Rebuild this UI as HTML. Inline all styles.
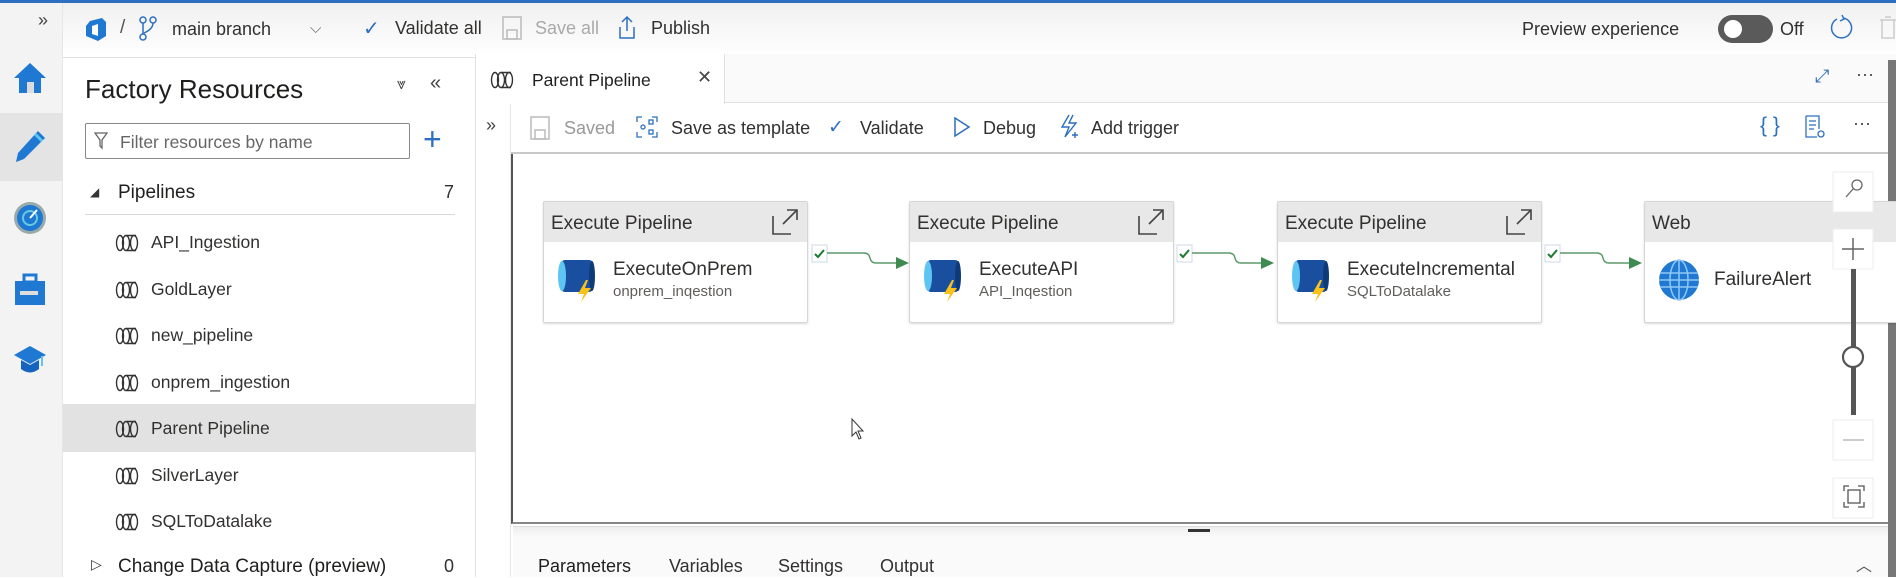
<!DOCTYPE html>
<html><head><meta charset="utf-8"><style>
*{box-sizing:border-box;margin:0;padding:0}
body{width:1896px;height:577px;overflow:hidden;background:#fff;font-family:"Liberation Sans",sans-serif;color:#323130;position:relative}
.a{position:absolute;white-space:nowrap}
.t18{font-size:18px}
.box{position:absolute;width:265px;height:122px;border:1px solid #d6d6d6;background:#fff;box-shadow:0 1px 2px rgba(0,0,0,.15);border-radius:2px}
.box .h{height:40px;background:#e8e8e8;font-size:19px;color:#323130;padding:11px 7px}
.box .n{position:absolute;left:69px;top:57px;font-size:19px}
.box .s{position:absolute;left:69px;top:81px;font-size:15px;color:#605e5c}
.item{position:absolute;left:63px;width:412px;height:47px;font-size:17.5px}
.item span{position:absolute;left:88px;top:13px}
.item svg{position:absolute;left:52px;top:15px}
</style></head><body>
<div class="a" style="left:0;top:0;width:1896px;height:3px;background:#2d6fc0"></div>
<div class="a" style="left:0;top:3px;width:1896px;height:55px;background:linear-gradient(#f0f0f0,#fff);border-bottom:1px solid #e1e1e1"></div>
<div class="a" style="left:0;top:3px;width:63px;height:574px;background:#f3f3f3;border-right:1px solid #e6e6e6"></div>
<div class="a" style="left:0;top:113px;width:63px;height:68px;background:#e4e4e4"></div>
<div class="a" style="left:38px;top:10px;font-size:18px;color:#444">»</div>
<!-- nav icons -->
<svg class="a" style="left:12px;top:60px" width="36" height="36" viewBox="0 0 36 36"><path d="M18 3 L34 18 H29 V33 H7 V18 H2 Z" fill="#1f78d1"/><rect x="15" y="22" width="7" height="11" fill="#ddd"/></svg>
<svg class="a" style="left:12px;top:128px" width="36" height="36" viewBox="0 0 36 36"><path d="M26 3 L33 10 L12 31 L4 34 L6 25 Z" fill="#1f78d1"/><path d="M23 6 L30 13" stroke="#5ec5f2" stroke-width="3"/></svg>
<svg class="a" style="left:12px;top:200px" width="36" height="36" viewBox="0 0 36 36"><circle cx="18" cy="18" r="16" fill="#9aa"/><circle cx="18" cy="18" r="13" fill="#1f78d1"/><circle cx="18" cy="18" r="7" fill="none" stroke="#6cd" stroke-width="2"/><path d="M18 18 L25 10" stroke="#fff" stroke-width="2"/></svg>
<svg class="a" style="left:12px;top:272px" width="36" height="36" viewBox="0 0 36 36"><rect x="3" y="9" width="30" height="24" fill="#1f78d1"/><rect x="12" y="3" width="12" height="7" fill="none" stroke="#1f78d1" stroke-width="3"/><rect x="8" y="19" width="18" height="4" fill="#ddd"/></svg>
<svg class="a" style="left:12px;top:342px" width="36" height="36" viewBox="0 0 36 36"><path d="M18 4 L34 13 L18 22 L2 13 Z" fill="#1f78d1"/><path d="M9 18 V27 Q18 34 27 27 V18 L18 23 Z" fill="#1565c0"/><path d="M30 14 V24" stroke="#5ec5f2" stroke-width="2"/></svg>
<!-- top bar -->
<svg class="a" style="left:84px;top:17px" width="24" height="26" viewBox="0 0 24 26"><path d="M6 4 L18 1 L22 5 V19 L14 24 L2 19 V9 Z" fill="#1f78d1"/><path d="M8 9 V17 L14 19 V7 Z" fill="#fff"/></svg>
<div class="a" style="left:120px;top:17px;font-size:19px;color:#555">/</div>
<svg class="a" style="left:138px;top:16px" width="22" height="26" viewBox="0 0 22 26" fill="none" stroke="#2d6fc0" stroke-width="1.5"><circle cx="5" cy="4" r="3"/><circle cx="5" cy="21" r="3"/><circle cx="15" cy="4" r="3"/><path d="M5 7 V18 M15 7 Q15 13 6 17"/></svg>
<div class="a t18" style="left:172px;top:19px">main branch</div>
<div class="a" style="left:310px;top:20px;font-size:15px;color:#666">⌵</div>
<div class="a" style="left:363px;top:16px;font-size:20px;color:#2d6fc0">✓</div>
<div class="a t18" style="left:395px;top:18px">Validate all</div>
<svg class="a" style="left:502px;top:16px" width="20" height="24" viewBox="0 0 20 24" fill="none" stroke="#bbb" stroke-width="1.5"><rect x="1" y="1" width="18" height="22"/><rect x="5" y="14" width="10" height="9"/></svg>
<div class="a t18" style="left:535px;top:18px;color:#aaa">Save all</div>
<svg class="a" style="left:617px;top:15px" width="20" height="26" viewBox="0 0 20 26" fill="none" stroke="#2d6fc0" stroke-width="1.5"><path d="M10 2 V16 M5 7 L10 2 L15 7 M3 12 V23 H17 V12"/></svg>
<div class="a t18" style="left:651px;top:18px">Publish</div>
<div class="a t18" style="left:1522px;top:19px">Preview experience</div>
<div class="a" style="left:1718px;top:15px;width:55px;height:28px;border-radius:14px;background:#5a5a5a"></div>
<div class="a" style="left:1724px;top:20px;width:18px;height:18px;border-radius:9px;background:#fff"></div>
<div class="a t18" style="left:1780px;top:19px">Off</div>
<svg class="a" style="left:1829px;top:15px" width="24" height="26" viewBox="0 0 24 26" fill="none" stroke="#2d6fc0" stroke-width="1.5"><path d="M8 4 A10 10 0 1 0 14 3 M13 0 L15 4 L11 6"/></svg>
<svg class="a" style="left:1878px;top:14px" width="18" height="26" viewBox="0 0 18 26" fill="none" stroke="#ccc" stroke-width="1.5"><path d="M2 6 H18 M4 6 V24 H16 V6 M7 3 H13"/></svg>
<!-- side panel -->
<div class="a" style="left:85px;top:74px;font-size:26px;color:#201f1e">Factory Resources</div>
<div class="a" style="left:397px;top:76px;font-size:16px;color:#444">⩔</div>
<div class="a" style="left:430px;top:72px;font-size:20px;color:#444">«</div>
<div class="a" style="left:85px;top:123px;width:325px;height:36px;border:1px solid #8a8886;border-radius:2px"></div>
<svg class="a" style="left:94px;top:132px" width="14" height="18" viewBox="0 0 14 18" fill="none" stroke="#666" stroke-width="1.3"><path d="M1 1 H13 L8 8 V16 L6 14 V8 Z"/></svg>
<div class="a" style="left:120px;top:132px;font-size:17.5px;color:#666">Filter resources by name</div>
<div class="a" style="left:423px;top:120px;font-size:32px;font-weight:200;color:#2d6fc0;line-height:38px">+</div>
<div class="a" style="left:90px;top:185px;font-size:12px;color:#333">◢</div>
<div class="a" style="left:118px;top:182px;font-size:19px;color:#201f1e">Pipelines</div>
<div class="a" style="left:444px;top:182px;font-size:18px">7</div>
<div class="a" style="left:85px;top:214px;width:370px;height:1px;background:#d8d8d8"></div>
<div class="a" style="left:63px;top:404px;width:412px;height:48px;background:#e2e2e2"></div>
<div class="item" style="top:219px"><svg width="28" height="18" viewBox="0 0 28 18" fill="none" stroke="#333" stroke-width="1.4"><ellipse cx="5" cy="9" rx="3.5" ry="7.5"/><ellipse cx="11" cy="9" rx="3.5" ry="7.5"/><ellipse cx="19" cy="9" rx="3.5" ry="7.5"/><path d="M11 1.5 H21 M11 16.5 H21"/></svg><span>API_Ingestion</span></div>
<div class="item" style="top:266px"><svg width="28" height="18" viewBox="0 0 28 18" fill="none" stroke="#333" stroke-width="1.4"><ellipse cx="5" cy="9" rx="3.5" ry="7.5"/><ellipse cx="11" cy="9" rx="3.5" ry="7.5"/><ellipse cx="19" cy="9" rx="3.5" ry="7.5"/><path d="M11 1.5 H21 M11 16.5 H21"/></svg><span>GoldLayer</span></div>
<div class="item" style="top:312px"><svg width="28" height="18" viewBox="0 0 28 18" fill="none" stroke="#333" stroke-width="1.4"><ellipse cx="5" cy="9" rx="3.5" ry="7.5"/><ellipse cx="11" cy="9" rx="3.5" ry="7.5"/><ellipse cx="19" cy="9" rx="3.5" ry="7.5"/><path d="M11 1.5 H21 M11 16.5 H21"/></svg><span>new_pipeline</span></div>
<div class="item" style="top:359px"><svg width="28" height="18" viewBox="0 0 28 18" fill="none" stroke="#333" stroke-width="1.4"><ellipse cx="5" cy="9" rx="3.5" ry="7.5"/><ellipse cx="11" cy="9" rx="3.5" ry="7.5"/><ellipse cx="19" cy="9" rx="3.5" ry="7.5"/><path d="M11 1.5 H21 M11 16.5 H21"/></svg><span>onprem_ingestion</span></div>
<div class="item" style="top:405px"><svg width="28" height="18" viewBox="0 0 28 18" fill="none" stroke="#333" stroke-width="1.4"><ellipse cx="5" cy="9" rx="3.5" ry="7.5"/><ellipse cx="11" cy="9" rx="3.5" ry="7.5"/><ellipse cx="19" cy="9" rx="3.5" ry="7.5"/><path d="M11 1.5 H21 M11 16.5 H21"/></svg><span>Parent Pipeline</span></div>
<div class="item" style="top:452px"><svg width="28" height="18" viewBox="0 0 28 18" fill="none" stroke="#333" stroke-width="1.4"><ellipse cx="5" cy="9" rx="3.5" ry="7.5"/><ellipse cx="11" cy="9" rx="3.5" ry="7.5"/><ellipse cx="19" cy="9" rx="3.5" ry="7.5"/><path d="M11 1.5 H21 M11 16.5 H21"/></svg><span>SilverLayer</span></div>
<div class="item" style="top:498px"><svg width="28" height="18" viewBox="0 0 28 18" fill="none" stroke="#333" stroke-width="1.4"><ellipse cx="5" cy="9" rx="3.5" ry="7.5"/><ellipse cx="11" cy="9" rx="3.5" ry="7.5"/><ellipse cx="19" cy="9" rx="3.5" ry="7.5"/><path d="M11 1.5 H21 M11 16.5 H21"/></svg><span>SQLToDatalake</span></div>
<div class="a" style="left:91px;top:556px;font-size:14px;color:#333">▷</div>
<div class="a" style="left:118px;top:556px;font-size:19px;color:#201f1e">Change Data Capture (preview)</div>
<div class="a" style="left:444px;top:556px;font-size:18px">0</div>
<!-- main area -->
<div class="a" style="left:475px;top:54px;width:1px;height:523px;background:#e1e1e1"></div>
<div class="a" style="left:476px;top:54px;width:1420px;height:49px;background:#fafafa;border-bottom:1px solid #e1e1e1"></div>
<div class="a" style="left:476px;top:54px;width:249px;height:50px;background:#fff;border-right:1px solid #e1e1e1"></div>
<svg class="a" style="left:490px;top:71px" width="28" height="18" viewBox="0 0 28 18" fill="none" stroke="#333" stroke-width="1.4"><ellipse cx="5" cy="9" rx="3.5" ry="7.5"/><ellipse cx="11" cy="9" rx="3.5" ry="7.5"/><ellipse cx="19" cy="9" rx="3.5" ry="7.5"/><path d="M11 1.5 H21 M11 16.5 H21"/></svg>
<div class="a" style="left:532px;top:70px;font-size:17.5px;color:#201f1e">Parent Pipeline</div>
<div class="a" style="left:697px;top:67px;font-size:18px;color:#444">✕</div>
<div class="a" style="left:1815px;top:66px;font-size:18px;color:#2d6fc0">⤢</div>
<div class="a" style="left:1856px;top:64px;font-size:18px;color:#444">···</div>
<!-- toolbar -->
<div class="a" style="left:476px;top:104px;width:1420px;height:50px;background:#fff;border-bottom:2px solid #c8c8c8"></div>
<div class="a" style="left:476px;top:104px;width:35px;height:473px;background:#fff;border-right:1px solid #e6e6e6"></div>
<div class="a" style="left:486px;top:115px;font-size:18px;color:#444">»</div>
<svg class="a" style="left:530px;top:116px" width="20" height="24" viewBox="0 0 20 24" fill="none" stroke="#bbb" stroke-width="1.5"><rect x="1" y="1" width="18" height="22"/><rect x="5" y="14" width="10" height="9"/></svg>
<div class="a t18" style="left:564px;top:118px;color:#999">Saved</div>
<svg class="a" style="left:636px;top:116px" width="22" height="22" viewBox="0 0 22 22" fill="none" stroke="#2d6fc0" stroke-width="1.3"><path d="M1 6 V1 H6 M16 1 H21 V6 M1 16 V21 H6 M16 21 H21 V16"/><circle cx="7" cy="11" r="2"/><rect x="13" y="4" width="4" height="4"/><rect x="13" y="14" width="4" height="4"/></svg>
<div class="a t18" style="left:671px;top:118px">Save as template</div>
<div class="a" style="left:828px;top:116px;font-size:19px;color:#2d6fc0">✓</div>
<div class="a t18" style="left:860px;top:118px">Validate</div>
<svg class="a" style="left:953px;top:116px" width="18" height="22" viewBox="0 0 18 22" fill="none" stroke="#2d6fc0" stroke-width="1.5"><path d="M2 2 L16 11 L2 20 Z"/></svg>
<div class="a t18" style="left:983px;top:118px">Debug</div>
<svg class="a" style="left:1059px;top:114px" width="22" height="26" viewBox="0 0 22 26" fill="none" stroke="#2d6fc0" stroke-width="1.4"><path d="M10 1 L3 13 H10 L6 23 L17 9 H10 L14 1 M16 18 V24 M13 21 H19"/></svg>
<div class="a t18" style="left:1091px;top:118px">Add trigger</div>
<div class="a" style="left:1760px;top:114px;font-size:21px;color:#2d6fc0">{ }</div>
<svg class="a" style="left:1805px;top:115px" width="22" height="26" viewBox="0 0 22 26" fill="none" stroke="#2d6fc0" stroke-width="1.3"><path d="M1 1 H14 V14 M1 1 V22 H12 M4 6 H11 M4 10 H11 M4 14 H9"/><circle cx="16" cy="19" r="3"/></svg>
<div class="a" style="left:1853px;top:113px;font-size:18px;color:#444">···</div>
<!-- canvas -->
<div class="a" style="left:511px;top:154px;width:1377px;height:370px;border-left:2px solid #555;border-bottom:2px solid #888;background:#fff"></div>
<div class="a" style="left:1888px;top:60px;width:8px;height:517px;background:#777"></div>
<div class="a" style="left:513px;top:526px;width:1375px;height:51px;background:linear-gradient(#eee,#fafafa 20%,#fafafa);border-top:1px solid #ddd"></div>
<div class="a" style="left:1188px;top:529px;width:22px;height:3px;background:#333"></div>
<div class="a" style="left:538px;top:556px;font-size:18px;color:#201f1e">Parameters</div>
<div class="a t18" style="left:669px;top:556px">Variables</div>
<div class="a t18" style="left:778px;top:556px">Settings</div>
<div class="a t18" style="left:880px;top:556px">Output</div>
<div class="a" style="left:1856px;top:552px;font-size:16px;color:#555">︿</div>
<!-- boxes -->
<div class="box" style="left:543px;top:201px"><div class="h">Execute Pipeline</div><div class="n">ExecuteOnPrem</div><div class="s">onprem_inqestion</div></div>
<div class="box" style="left:909px;top:201px"><div class="h">Execute Pipeline</div><div class="n">ExecuteAPI</div><div class="s">API_Inqestion</div></div>
<div class="box" style="left:1277px;top:201px"><div class="h">Execute Pipeline</div><div class="n">ExecuteIncremental</div><div class="s">SQLToDatalake</div></div>
<div class="box" style="left:1644px;top:201px;width:260px"><div class="h">Web</div><div class="n" style="top:67px">FailureAlert</div></div>
<svg class="a" style="left:0;top:0;pointer-events:none" width="1896" height="577">
<defs><g id="ext"><path d="M0 6 V24 H18 M10 14 L24 0 M14 0 H24 V10" fill="none" stroke="#444" stroke-width="1.6"/></g>
<g id="pipe"><rect x="5" y="2" width="32" height="32" rx="4" fill="#1a4fa0"/><ellipse cx="6" cy="18" rx="4" ry="15" fill="#5ec5f2"/><ellipse cx="36" cy="18" rx="3" ry="15" fill="#0f3a7a"/><path d="M30 22 L22 36 H28 L25 44 L35 30 H29 L32 22 Z" fill="#f8c21a"/></g>
<g id="con"><rect x="0" y="0" width="15" height="17" fill="#fff" stroke="#cfd8e6"/><path d="M3 9 L6 12 L12 5" fill="none" stroke="#1a7a2e" stroke-width="2"/><path d="M15 8 H52 Q57 8 58 13 Q59 18 64 18 H84" fill="none" stroke="#5a9a6a" stroke-width="1.5"/><path d="M84 12 L97 18 L84 24 Z" fill="#3f8a50"/></g></defs>
<use href="#ext" transform="translate(773,210)"/><use href="#ext" transform="translate(1139,210)"/><use href="#ext" transform="translate(1507,210)"/>
<use href="#pipe" transform="translate(556,258)"/><use href="#pipe" transform="translate(922,258)"/><use href="#pipe" transform="translate(1290,258)"/>
<use href="#con" transform="translate(812,245)"/><use href="#con" transform="translate(1177,245)"/><use href="#con" transform="translate(1545,245)"/>
<circle cx="1679" cy="280" r="20" fill="#1f78d1"/><g fill="none" stroke="#8fc8f5" stroke-width="1.5"><ellipse cx="1679" cy="280" rx="9" ry="20"/><path d="M1679 260 V300 M1660 273 H1698 M1660 287 H1698 M1659 280 H1699"/></g>
<!-- zoom controls -->
<rect x="1833" y="172" width="40" height="40" fill="#fff" stroke="#eee"/>
<circle cx="1857" cy="185" r="5" fill="none" stroke="#666" stroke-width="1.3"/><path d="M1853 189 L1846 197" stroke="#666" stroke-width="1.3"/>
<rect x="1833" y="229" width="40" height="40" fill="#fff" stroke="#eee"/>
<path d="M1853 238 V260 M1842 249 H1864" stroke="#666" stroke-width="1.5"/>
<rect x="1851" y="269" width="5" height="146" fill="#555"/>
<circle cx="1853" cy="357" r="10" fill="#fff" stroke="#555" stroke-width="2.2"/>
<rect x="1833" y="420" width="40" height="40" fill="#fff" stroke="#eee"/>
<path d="M1843 440 H1864" stroke="#bbb" stroke-width="1.5"/>
<rect x="1833" y="478" width="40" height="40" fill="#fff" stroke="#eee"/>
<path d="M1844 491 V486 H1849 M1858 486 H1864 V491 M1844 502 V507 H1849 M1858 507 H1864 V502" fill="none" stroke="#555" stroke-width="1.3"/><rect x="1848" y="490" width="12" height="13" fill="none" stroke="#555" stroke-width="1.3"/>
<!-- cursor -->
<path d="M852 419 V436 L856 432 L859 439 L861 438 L858 431 L863 431 Z" fill="#fff" stroke="#333" stroke-width="1"/>
</svg>
</body></html>
